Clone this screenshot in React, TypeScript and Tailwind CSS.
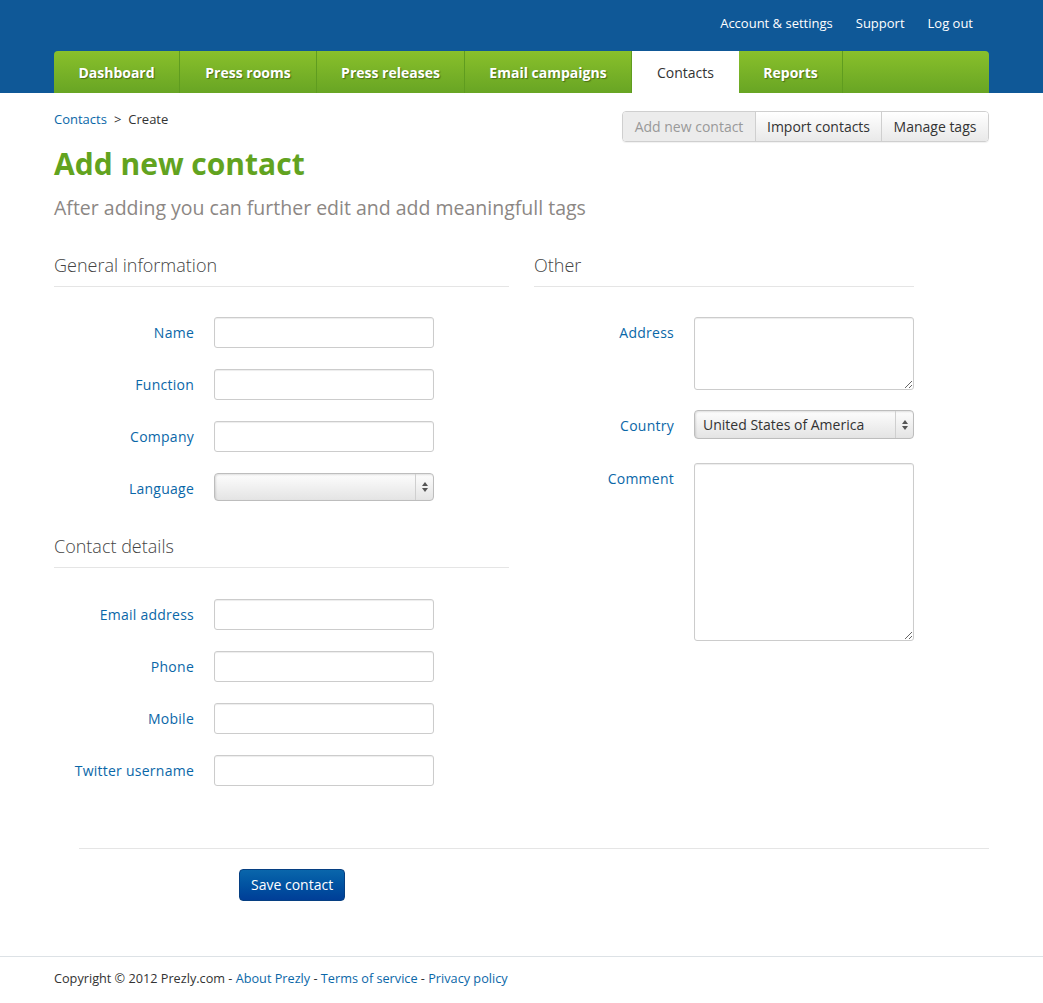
import type { ReactNode } from 'react';

const tabs = [
  { label: 'Dashboard', width: 'w-[126px]' },
  { label: 'Press rooms', width: 'w-[137px]' },
  { label: 'Press releases', width: 'w-[148px]' },
  { label: 'Email campaigns', width: 'w-[167px]' },
  { label: 'Contacts', width: 'w-[107px]', active: true },
  { label: 'Reports', width: 'w-[104px]' },
];

function TextInput() {
  return (
    <input
      type="text"
      className="h-[31px] w-[220px] rounded-[3px] border border-[#cccccc] bg-white px-2 text-sm shadow-[inset_0_1px_1px_rgba(0,0,0,0.075)] outline-none"
    />
  );
}

function FakeSelect({ value, height }: { value?: string; height: string }) {
  return (
    <div
      className={`flex ${height} w-[220px] items-stretch rounded-[4px] border border-[#bdbdbd] bg-gradient-to-b from-[#fdfdfd] to-[#e4e4e4] shadow-[inset_1px_1px_2px_rgba(0,0,0,0.12)]`}
    >
      <span className="flex flex-1 items-center pl-2 text-sm text-[#333]">{value}</span>
      <span className="flex w-[18px] flex-col items-center justify-center gap-[2px] border-l border-[#cfcfcf]">
        <span className="h-0 w-0 border-x-[3px] border-b-[4px] border-x-transparent border-b-[#555]" />
        <span className="h-0 w-0 border-x-[3px] border-t-[4px] border-x-transparent border-t-[#555]" />
      </span>
    </div>
  );
}

function Field({ label, children, labelPad = 'pt-[6px]' }: { label: string; children: ReactNode; labelPad?: string }) {
  return (
    <div className="flex items-start">
      <label className={`w-[140px] shrink-0 text-right text-sm tracking-[0.25px] text-[#0a67a8] ${labelPad}`}>{label}</label>
      <div className="ml-5">{children}</div>
    </div>
  );
}

function SectionTitle({ title }: { title: string }) {
  return (
    <h3 className="border-b border-[#e5e5e5] pb-[9px] text-[18px] leading-6 font-light text-[#444]">{title}</h3>
  );
}

export default function App() {
  return (
    <div className="min-h-[1003px] bg-white font-['Open_Sans',sans-serif] text-[#333]">
      <header className="bg-[#0f5897]">
        <div className="mx-auto w-[935px]">
          <div className="flex h-[51px] items-center justify-end gap-[23px] pr-4 pb-[3px] text-[13px] text-white">
            <a>Account &amp; settings</a>
            <a>Support</a>
            <a>Log out</a>
          </div>
          <nav className="flex h-[42px] overflow-hidden rounded-t-[4px] bg-gradient-to-b from-[#89c02b] to-[#68a524]">
            {tabs.map((tab) =>
              tab.active ? (
                <div key={tab.label} className={`${tab.width} flex items-center justify-center bg-white pt-px text-sm text-[#333]`}>
                  {tab.label}
                </div>
              ) : (
                <div
                  key={tab.label}
                  className={`${tab.width} flex items-center justify-center border-r border-[#5f9c1f] pt-px text-sm font-bold text-white [text-shadow:1px_1px_1px_rgba(40,60,10,0.55)]`}
                >
                  {tab.label}
                </div>
              ),
            )}
          </nav>
        </div>
      </header>

      <main className="mx-auto w-[935px]">
        <div className="flex items-start justify-between pt-[18px]">
          <div className="-mt-[1px] text-[13px]">
            <a className="text-[#0a67a8]">Contacts</a>
            <span className="mx-[7px]">&gt;</span>
            <span>Create</span>
          </div>
          <div className="flex h-[31px] overflow-hidden rounded-[4px] border border-[#cfcfcf] text-sm shadow-[0_1px_1px_rgba(0,0,0,0.06)]">
            <span className="flex w-[132px] items-center justify-center bg-[#ececec] text-[#999]">Add new contact</span>
            <span className="flex w-[126px] items-center justify-center border-l border-[#cfcfcf] bg-gradient-to-b from-white to-[#e9e9e9] text-[#333]">
              Import contacts
            </span>
            <span className="flex w-[107px] items-center justify-center border-l border-[#cfcfcf] bg-gradient-to-b from-white to-[#e9e9e9] text-[#333]">
              Manage tags
            </span>
          </div>
        </div>

        <h1 className="mt-[2px] text-[30px] leading-[40px] font-bold text-[#62a31f]">Add new contact</h1>
        <p className="mt-[12px] text-[19.5px] leading-6 font-normal text-[#8c8784]">
          After adding you can further edit and add meaningfull tags
        </p>

        <div className="mt-[33px] flex gap-[25px]">
          <div className="w-[455px]">
            <SectionTitle title="General information" />
            <div className="mt-[30px] flex flex-col gap-[21px]">
              <Field label="Name"><TextInput /></Field>
              <Field label="Function"><TextInput /></Field>
              <Field label="Company"><TextInput /></Field>
              <Field label="Language" labelPad="pt-[6px]"><FakeSelect height="h-[28px]" /></Field>
            </div>

            <div className="mt-[33px]">
              <SectionTitle title="Contact details" />
            </div>
            <div className="mt-[31px] flex flex-col gap-[21px]">
              <Field label="Email address"><TextInput /></Field>
              <Field label="Phone"><TextInput /></Field>
              <Field label="Mobile"><TextInput /></Field>
              <Field label="Twitter username"><TextInput /></Field>
            </div>
          </div>

          <div className="w-[380px]">
            <SectionTitle title="Other" />
            <div className="mt-[30px] flex flex-col">
              <Field label="Address">
                <textarea className="block h-[73px] w-[220px] rounded-[3px] border border-[#cccccc] bg-white shadow-[inset_0_1px_1px_rgba(0,0,0,0.075)] outline-none" />
              </Field>
              <div className="mt-[20px]">
                <Field label="Country" labelPad="pt-[6px]">
                  <FakeSelect value="United States of America" height="h-[29px]" />
                </Field>
              </div>
              <div className="mt-[24px]">
                <Field label="Comment" labelPad="pt-[6px]">
                  <textarea className="block h-[178px] w-[220px] rounded-[3px] border border-[#cccccc] bg-white shadow-[inset_0_1px_1px_rgba(0,0,0,0.075)] outline-none" />
                </Field>
              </div>
            </div>
          </div>
        </div>

        <div className="mt-[62px] ml-[25px] border-t border-[#e5e5e5] pt-[20px] pl-[160px]">
          <button className="h-[32px] rounded-[4px] border border-[#063f82] bg-gradient-to-b from-[#0a66ab] to-[#003e97] px-[11px] text-sm text-white">
            Save contact
          </button>
        </div>
      </main>

      <footer className="mt-[55px] border-t border-[#dde2e6]">
        <div className="mx-auto w-[935px] pt-[12px] pb-[14px] text-[12.7px] text-[#333]">
          Copyright © 2012 Prezly.com - <a className="text-[#0a67a8]">About Prezly</a> -{' '}
          <a className="text-[#0a67a8]">Terms of service</a> - <a className="text-[#0a67a8]">Privacy policy</a>
        </div>
      </footer>
    </div>
  );
}
